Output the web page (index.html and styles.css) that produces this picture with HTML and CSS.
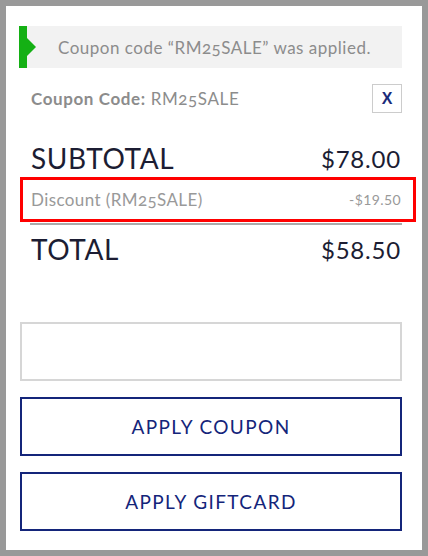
FILE: index.html
```html
<!DOCTYPE html>
<html lang="en">
<head>
    <meta charset="UTF-8">
    <meta name="viewport" content="width=device-width, initial-scale=1.0">
    <title>Cart totals</title>
    <link rel="stylesheet" href="styles.css">
</head>
<body>
    <div class="card">
        <div class="notice">
            <span class="notice-bar"></span>
            <span class="notice-text">Coupon code “<span class="code">RM25SALE</span>” was applied.</span>
        </div>

        <div class="coupon-row">
            <span class="coupon-label"><strong>Coupon Code:</strong> <span class="code">RM25SALE</span></span>
            <button class="remove-btn">X</button>
        </div>

        <div class="summary">
            <div class="line big">
                <span>SUBTOTAL</span>
                <span class="price">$78.00</span>
            </div>
            <div class="line discount">
                <span>Discount (<span class="code">RM25SALE</span>)</span>
                <span class="discount-amount">-$19.50</span>
            </div>
            <div class="divider"></div>
            <div class="line big total">
                <span>TOTAL</span>
                <span class="price">$58.50</span>
            </div>
        </div>

        <input class="coupon-input" type="text">
        <button class="outline-btn">APPLY COUPON</button>
        <button class="outline-btn">APPLY GIFTCARD</button>
    </div>
</body>
</html>
```

FILE: styles.css
```css
body {
    margin: 0;
    font-family: Lato, "Open Sans", sans-serif;
    background-color: #fff;
}

.card {
    box-sizing: border-box;
    height: 556px;
    border: 6px solid #999;
    padding: 20px 20px 0 14px;
}

.code {
    font-variant-numeric: oldstyle-nums;
}

/* notice */
.notice {
    display: flex;
    align-items: center;
    height: 42px;
    margin-left: -1px;
    background-color: #f2f2f2;
}

.notice-bar {
    position: relative;
    align-self: stretch;
    width: 8px;
    background-color: #14b014;
}

.notice-bar::after {
    content: "";
    position: absolute;
    top: 12px;
    left: 8px;
    border-top: 9px solid transparent;
    border-bottom: 9px solid transparent;
    border-left: 9px solid #14b014;
}

.notice-text {
    padding-left: 31px;
    font-size: 17px;
    color: #8c8c8c;
    letter-spacing: 0.5px;
}

/* coupon row */
.coupon-row {
    display: flex;
    align-items: center;
    justify-content: space-between;
    margin-top: 16px;
    padding: 0 0 0 11px;
}

.coupon-label {
    font-size: 17px;
    color: #8c8c8c;
    letter-spacing: 0.6px;
}

.coupon-label strong {
    font-weight: 700;
}

.remove-btn {
    width: 30px;
    height: 29px;
    padding: 0;
    border: 1px solid #ccc;
    background: #fff;
    color: #1a2b7a;
    font-family: "Liberation Sans", Arial, sans-serif;
    font-size: 16px;
    font-weight: 700;
}

/* totals */
.summary {
    padding: 0 1px 0 11px;
    margin-top: 25px;
}

.line {
    display: flex;
    justify-content: space-between;
    align-items: center;
}

.big {
    height: 40px;
    font-size: 28px;
    color: #1c1d33;
    letter-spacing: 0.6px;
}

.price {
    font-size: 24px;
    letter-spacing: 0.8px;
}

.discount {
    height: 39px;
    margin: -1px -15px 0 -11px;
    padding: 0 12px 0 8px;
    border: 3px solid #f00;
    font-size: 17px;
    color: #999;
    letter-spacing: 0.4px;
}

.discount-amount {
    font-size: 14px;
}

.divider {
    height: 2px;
    margin: 1px -1px 0 -1px;
    background-color: #aaa;
}

.total {
    margin-top: 4px;
}

/* form */
.coupon-input {
    display: block;
    box-sizing: border-box;
    width: 100%;
    height: 59px;
    margin-top: 53px;
    border: 2px solid #d6d6d6;
}

.outline-btn {
    display: block;
    box-sizing: border-box;
    width: 100%;
    height: 59px;
    margin-top: 16px;
    border: 2px solid #14257a;
    background: #fff;
    color: #14257a;
    font-family: Lato, "Open Sans", sans-serif;
    font-size: 19px;
    letter-spacing: 1.4px;
}
```
